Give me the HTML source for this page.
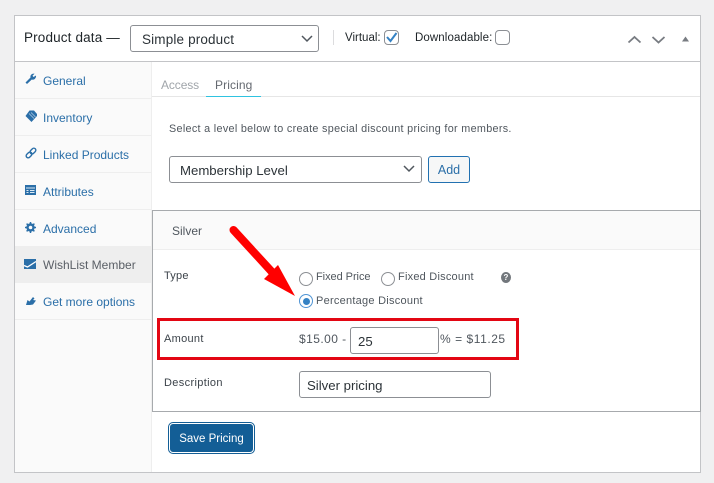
<!DOCTYPE html>
<html><head><meta charset="utf-8">
<style>
html,body{margin:0;padding:0;}
body{width:714px;height:483px;background:#f0f0f1;position:relative;overflow:hidden;font-family:"Liberation Sans",sans-serif;color:#3c434a;}
div,span{position:absolute;box-sizing:border-box;white-space:nowrap;}
.t{font-size:11.5px;line-height:16px;}
.side{left:43px;color:#2b6fa8;font-size:12px;line-height:16px;letter-spacing:0;}
.sep{left:15px;width:136px;height:1px;background:#eee;}
.box{background:#fff;border:1px solid #8c8f94;border-radius:3px;}
svg{position:absolute;}
</style></head>
<body>
<div style="left:14px;top:15px;width:687px;height:458px;background:#fff;border:1px solid #c3c4c7;"></div>
<div style="left:15px;top:61px;width:685px;height:1px;background:#c3c4c7;"></div>
<div style="left:15px;top:62px;width:137px;height:410px;background:#fafafa;border-right:1px solid #eee;"></div>

<div style="left:24px;top:29px;font-size:13.5px;line-height:18px;color:#1d2327;letter-spacing:.15px;">Product data —</div>
<div class="box" style="left:130px;top:25px;width:189px;height:27px;"></div>
<div style="left:142px;top:31px;font-size:13.5px;line-height:18px;color:#2c3338;letter-spacing:.15px;">Simple product</div>
<svg style="left:300px;top:34px" width="14" height="10"><path d="M2 2l5 5 5-5" fill="none" stroke="#50575e" stroke-width="1.5"/></svg>
<div style="left:333px;top:30px;width:1px;height:15px;background:#dcdcde;"></div>
<div class="t" style="left:345px;top:30px;color:#1d2327;">Virtual:</div>
<div class="box" style="left:384px;top:30px;width:15px;height:15px;border-radius:4px;"></div>
<svg style="left:384px;top:30px" width="15" height="15"><path d="M3 7l3.500 4L12.500 3" fill="none" stroke="#3582c4" stroke-width="2"/></svg>
<div class="t" style="left:415px;top:30px;color:#1d2327;letter-spacing:.1px;">Downloadable:</div>
<div class="box" style="left:495px;top:30px;width:15px;height:15px;border-radius:4px;"></div>
<svg style="left:626px;top:32px" width="70" height="14"><path d="M2.500 10.500L8.500 5l6 5.500M26.500 5l6 5.500 6-5.500" fill="none" stroke="#787c82" stroke-width="1.800"/><path d="M56 9.500l3.500-5 3.500 5z" fill="#787c82"/></svg>

<!-- sidebar -->
<div class="sep" style="top:98px"></div><div class="sep" style="top:135px"></div><div class="sep" style="top:172px"></div><div class="sep" style="top:209px"></div><div class="sep" style="top:319px"></div>
<div style="left:15px;top:246px;width:136px;height:37px;background:#eee;"></div>

<svg style="left:25px;top:73px" width="12" height="12"><path d="M.5 9.500L5.500 4.500C5 2 7 .3 9.500.7L7.500 2.700 8.500 4 11 2.500C11.500 5 9 7.500 6.800 6.500L2 11z" fill="#2b6fa8"/></svg>
<div class="side" style="top:73px">General</div>
<svg style="left:25px;top:110px" width="12" height="13"><path d="M4.500.5H9L12 4v2l-5.500 6L.5 6z" fill="#2b6fa8"/><path d="M4 3.500l5 5M6 2.500l4.500 4.500" stroke="#bcd3e6" stroke-width=".7"/></svg>
<div class="side" style="top:110px">Inventory</div>
<svg style="left:25px;top:147px" width="12" height="12"><g transform="rotate(-45 6 6)" fill="none" stroke="#2b6fa8" stroke-width="1.400"><rect x="0" y="4" width="6.500" height="4" rx="2"/><rect x="5.500" y="4" width="6.500" height="4" rx="2"/></g></svg>
<div class="side" style="top:147px">Linked Products</div>
<svg style="left:25px;top:185px" width="11" height="11"><rect width="11" height="10" fill="#2b6fa8"/><path d="M1 3h9M1.500 5.500h2M5 5.500h4.500M1.500 7.500h2M5 7.500h4.500" stroke="#dceaf4" stroke-width="1"/></svg>
<div class="side" style="top:184px">Attributes</div>
<svg style="left:25px;top:222px" width="11" height="11"><circle cx="5.500" cy="5.500" r="3" fill="none" stroke="#2b6fa8" stroke-width="2.400"/><path d="M5.500 0v11M0 5.500h11M1.600 1.600l7.800 7.800M9.400 1.600l-7.800 7.800" stroke="#2b6fa8" stroke-width="1.500" stroke-dasharray="2 7 2"/></svg>
<div class="side" style="top:221px">Advanced</div>
<svg style="left:24px;top:259px" width="12" height="10"><rect width="12" height="10" fill="#2b6fa8"/><path d="M0 6.500l3.500 1.500L12 2.500" fill="none" stroke="#fff" stroke-width="1.300"/></svg>
<div class="side" style="top:257px;color:#5a5f66;">WishList Member</div>
<svg style="left:26px;top:296px" width="11" height="11"><path d="M0 9l1.500-5 2 1.500L7 1l1.500 1.500L7 4l3 .5L7 8.500 4 9z" fill="#2b6fa8"/></svg>
<div class="side" style="top:294px">Get more options</div>

<!-- tabs -->
<div style="left:152px;top:96px;width:548px;height:1px;background:#e6e6e6;"></div>
<div style="left:206px;top:96px;width:55px;height:1px;background:#2fc3e0;"></div>
<div class="t" style="left:161px;top:77px;color:#a0a5aa;font-size:12px;letter-spacing:-.1px;">Access</div>
<div class="t" style="left:215px;top:77px;color:#646970;font-size:12px;letter-spacing:.1px;">Pricing</div>

<div class="t" style="left:169px;top:121px;font-size:10.800px;letter-spacing:.31px;color:#50575e;">Select a level below to create special discount pricing for members.</div>
<div class="box" style="left:169px;top:156px;width:253px;height:27px;"></div>
<div style="left:180px;top:162px;font-size:13.200px;line-height:18px;color:#2c3338;">Membership Level</div>
<svg style="left:402px;top:164px" width="14" height="10"><path d="M2 2l5 5 5-5" fill="none" stroke="#50575e" stroke-width="1.500"/></svg>
<div style="left:428px;top:156px;width:42px;height:27px;background:#f6f7f7;border:1px solid #2271b1;border-radius:3px;color:#2b6fa8;font-size:12.500px;line-height:26px;text-align:center;">Add</div>

<!-- silver panel -->
<div style="left:152px;top:210px;width:549px;height:202px;background:#fff;border:1px solid #a7aaad;"></div>
<div style="left:153px;top:211px;width:547px;height:39px;background:#fafafa;border-bottom:1px solid #eee;"></div>
<div class="t" style="left:172px;top:223px;color:#50575e;font-size:12px;">Silver</div>
<div class="t" style="left:164px;top:268px;font-size:11px;letter-spacing:.2px;">Type</div>
<div class="t" style="left:164px;top:331px;font-size:11px;letter-spacing:.3px;">Amount</div>
<div class="t" style="left:164px;top:375px;font-size:11px;letter-spacing:.35px;">Description</div>

<div class="box" style="left:299px;top:271.500px;width:14px;height:14px;border-radius:50%;"></div>
<div class="t" style="left:316px;top:269px;font-size:11px;letter-spacing:-.05px;color:#50575e;">Fixed Price</div>
<div class="box" style="left:381px;top:271.500px;width:14px;height:14px;border-radius:50%;"></div>
<div class="t" style="left:398px;top:269px;font-size:11px;letter-spacing:.22px;color:#50575e;">Fixed Discount</div>
<div style="left:501px;top:271.500px;width:10px;height:11px;border-radius:50%;background:#72777c;color:#fff;font-size:8px;line-height:11px;text-align:center;font-weight:bold;">?</div>
<div style="left:299px;top:294px;width:14px;height:14px;border-radius:50%;border:1px solid #4f94d4;background:#fff;"></div>
<div style="left:302.500px;top:297.500px;width:7px;height:7px;border-radius:50%;background:#3582c4;"></div>
<div class="t" style="left:316px;top:293px;font-size:11px;letter-spacing:.25px;color:#50575e;">Percentage Discount</div>

<div class="t" style="left:299px;top:331px;font-size:12px;letter-spacing:.45px;color:#50575e;">$15.00 -</div>
<div class="box" style="left:350px;top:327px;width:89px;height:27px;"></div>
<div style="left:358px;top:333px;font-size:13.200px;line-height:18px;color:#2c3338;">25</div>
<div class="t" style="left:440px;top:331px;font-size:12px;letter-spacing:.55px;color:#50575e;">% = $11.25</div>
<div class="box" style="left:299px;top:371px;width:192px;height:27px;"></div>
<div style="left:307px;top:377px;font-size:13.200px;line-height:18px;color:#2c3338;">Silver pricing</div>

<div style="left:157px;top:318px;width:362px;height:42px;border:3px solid #e30613;"></div>
<svg style="left:225px;top:222px" width="90" height="85"><path d="M8.500 8L47 50" stroke="#f00" stroke-width="8" stroke-linecap="round"/><path d="M39 57L53 43 70 74z" fill="#f00"/></svg>

<div style="left:168px;top:422px;width:87px;height:32px;background:#135e96;border:1px solid #135e96;border-radius:5px;"></div>
<div style="left:169px;top:423px;width:85px;height:30px;border:1px solid #fff;border-radius:4px;background:#135e96;"></div>
<div style="left:168px;top:431px;width:87px;text-align:center;color:#fff;font-size:11.500px;line-height:16px;">Save Pricing</div>
</body></html>
